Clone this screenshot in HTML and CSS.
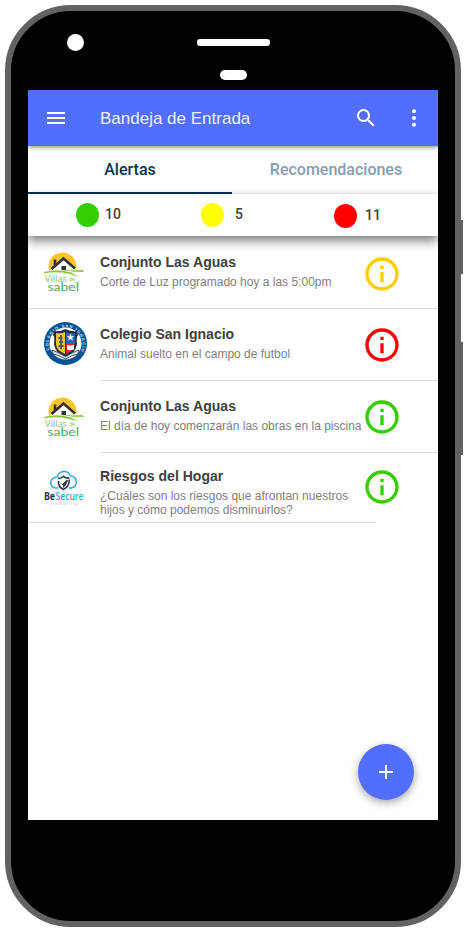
FILE: index.html
```html
<!DOCTYPE html>
<html lang="es">
<head>
<meta charset="utf-8">
<title>Bandeja de Entrada</title>
<link rel="stylesheet" href="styles.css">
</head>
<body>
<svg class="defs" width="0" height="0" aria-hidden="true">
  <defs>
    <symbol id="info" viewBox="0 0 24 24"><path d="M11 17h2v-6h-2v6zm1-15C6.480 2 2 6.480 2 12s4.480 10 10 10 10-4.480 10-10S17.520 2 12 2zm0 18c-4.410 0-8-3.590-8-8s3.590-8 8-8 8 3.590 8 8-3.590 8-8 8zM11 9h2V7h-2v2z"/></symbol>
    <clipPath id="round"><circle cx="20" cy="20" r="20"/></clipPath>
    <symbol id="villas" viewBox="0 0 40 40">
      <g clip-path="url(#round)">
        <circle cx="18.500" cy="14.500" r="14" fill="#fdc52c"/>
        <path d="M10.500 16L20.500 7.500L31 17L40 20V40H0V20L10 17z" fill="#fff"/>
        <path d="M0 20H40V40H0z" fill="#fff"/>
        <path d="M7.500 17L19.500 6.500L31 16.500M11 13V7.500" fill="none" stroke="#333138" stroke-width="2.600"/>
        <path d="M17.500 14h4.500v4h-4.500z" fill="#333138"/>
        <path d="M0 20Q20 15 35 25Q18 18 0 21.500z" fill="#8cc63f"/>
        <path d="M14 20Q26 17 39 18.500M20 21Q30 19 40 19.500" fill="none" stroke="#8cc63f" stroke-width=".9"/>
      </g>
      <text x="1" y="30" class="villas-top" textLength="22" lengthAdjust="spacingAndGlyphs">Villas</text>
      <text x="25" y="29" class="villas-de">de</text>
      <text x="3.500" y="39" class="villas-bottom" textLength="31.500" lengthAdjust="spacingAndGlyphs">sabel</text>
    </symbol>
  </defs>
</svg>
<div class="phone">
  <i class="side-key key-short"></i>
  <i class="side-key key-long"></i>
  <div class="bezel">
    <i class="camera"></i>
    <div class="sensors"><i class="speaker"></i><i class="sensor"></i></div>
  </div>
  <main class="screen">
    <header class="appbar">
      <svg class="icon menu" viewBox="0 0 24 24"><path d="M3 18h18v-2H3v2zm0-5h18v-2H3v2zm0-7v2h18V6H3z"/></svg>
      <h1>Bandeja de Entrada</h1>
      <svg class="icon search" viewBox="0 0 24 24"><path d="M15.500 14h-.79l-.28-.27A6.471 6.471 0 0 0 16 9.500 6.500 6.500 0 1 0 9.500 16c1.610 0 3.090-.59 4.230-1.570l.27.28v.79l5 4.990L20.490 19l-4.990-5zm-6 0C7.010 14 5 11.990 5 9.500S7.010 5 9.500 5 14 7.010 14 9.500 11.990 14 9.500 14z"/></svg>
      <svg class="icon" viewBox="0 0 24 24"><circle cx="12" cy="5.300" r="2"/><circle cx="12" cy="12" r="2"/><circle cx="12" cy="18.700" r="2"/></svg>
    </header>
    <nav class="tabs">
      <span class="tab active">Alertas</span>
      <span class="tab other">Recomendaciones</span>
    </nav>
    <section class="summary">
      <span class="count green"><i class="dot"></i>10</span>
      <span class="count yellow"><i class="dot"></i>5</span>
      <span class="count red"><i class="dot"></i>11</span>
    </section>
    <section class="list">
      <article class="row first">
        <div class="avatar"><svg width="40" height="40"><use href="#villas"/></svg></div>
        <div class="text"><h2>Conjunto Las Aguas</h2><p>Corte de Luz programado hoy a las 5:00pm</p></div>
        <svg class="status amber"><use href="#info"/></svg>
      </article>
      <article class="row">
        <div class="avatar"><svg width="44" height="44" viewBox="0 0 44 44">
          <defs><path id="ring" d="M5.500 28A17 17 0 1 1 37.500 28"/></defs>
          <circle cx="21.500" cy="21.500" r="21.500" fill="#075392"/>
          <circle cx="21.500" cy="21.500" r="16" fill="#fff"/>
          <text class="ring-text"><textPath href="#ring" textLength="66">COLEGIO SAN IGNACIO</textPath></text>
          <path d="M10 9Q16 10 21.500 7Q27 10 33 9L34 13Q32 15 33 22Q32 31 21.500 35Q11 31 10 22Q11 15 9 13z" fill="#222b42"/>
          <path d="M12 11Q17 12 21 10V32Q12 28 12 22z" fill="#f5c331"/>
          <path d="M22 10Q26 12 31 11V21H22z" fill="#2368b5"/>
          <path d="M22 21h9Q31 29 22 32z" fill="#d92635"/>
          <path d="M26.500 11.500l1 2.700h2.700l-2.100 1.700.8 2.600-2.400-1.500-2.400 1.500.8-2.600-2.100-1.700h2.700z" fill="#fff"/>
          <path d="M23 23l3.500.6 3.500-.6v4.500l-3.500.7-3.500-.7z" fill="#fff"/>
          <path d="M17 13v14M14.500 16h4M15 20h4M14.500 24h5" stroke="#4b5668" stroke-width="1.800"/>
          <path d="M8 28Q14 30 21.500 34.500Q29 30 35 28L34 32Q28 33 21.500 37Q15 33 9 32z" fill="#d9dde1" stroke="#222b42" stroke-width=".8"/>
        </svg></div>
        <div class="text"><h2>Colegio San Ignacio</h2><p>Animal suelto en el campo de futbol</p></div>
        <svg class="status danger"><use href="#info"/></svg>
      </article>
      <article class="row">
        <div class="avatar"><svg width="40" height="40"><use href="#villas"/></svg></div>
        <div class="text"><h2>Conjunto Las Aguas</h2><p>El día de hoy comenzarán las obras en la piscina</p></div>
        <svg class="status ok"><use href="#info"/></svg>
      </article>
      <article class="row last">
        <div class="avatar"><svg width="40" height="40" viewBox="0 0 40 40">
          <path d="M14.500 21H11.500A5.200 5.200 0 0 1 11 10.700Q12 9.500 13.300 9.700A7 7 0 0 1 26.500 8.700Q32.300 9.500 32.300 15Q32 20.500 27 21H25" fill="none" stroke="#2fa9df" stroke-width="1.500"/>
          <path d="M14 11.500Q17.500 11.500 19.500 9.300Q22 11.500 25.500 11M14.500 14Q14 20 19.500 22.500Q25 20 25.500 12.500" fill="none" stroke="#263348" stroke-width="1.600"/>
          <path d="M15.500 16l3 1 4.500-4.500 1 1-2 4.500-3 3v-3z" fill="#263348"/>
          <text x="0" y="33" class="secure-be" textLength="11" lengthAdjust="spacingAndGlyphs">Be</text>
          <text x="11.500" y="33" class="secure" textLength="28" lengthAdjust="spacingAndGlyphs">Secure</text>
          <text x="7" y="37.500" class="secure-tag" textLength="27">SEGURIDAD TOTAL</text>
        </svg></div>
        <div class="text"><h2>Riesgos del Hogar</h2><p>¿Cuáles son los riesgos que afrontan nuestros<br>hijos y cómo podemos disminuirlos?</p></div>
        <svg class="status ok"><use href="#info"/></svg>
      </article>
    </section>
    <div class="fab"><svg class="icon" viewBox="0 0 24 24"><path d="M19 13h-6v6h-2v-6H5v-2h6V5h2v6h6v2z"/></svg></div>
  </main>
</div>
</body>
</html>
```

FILE: styles.css
```css
* { box-sizing: border-box; }
body { margin: 0; padding: 5px; background: #fff; font-family: "Liberation Sans", Arial, sans-serif; }
h1, h2, p { margin: 0; }
.defs { position: absolute; }
.phone { position: relative; width: 456px; height: 922px; border: 6px solid #626262; border-radius: 66px; background: #000; padding: 0 17px; }
.side-key { position: absolute; right: -8px; width: 8px; background: #626262; }
.key-short { top: 209px; height: 54px; }
.key-long { top: 331px; height: 113px; }
.bezel { height: 79px; display: flex; padding-left: 39px; }
.camera { width: 17px; height: 17px; margin-top: 23px; border-radius: 50%; background: #fff; }
.sensors { display: flex; flex-direction: column; align-items: center; margin-left: 113px; padding-top: 28px; gap: 24px; }
.speaker { width: 73px; height: 7px; border-radius: 3px; background: #fff; }
.sensor { width: 27px; height: 10px; border-radius: 5px; background: #fff; }
.screen { position: relative; width: 410px; height: 730px; background: #fff; overflow: hidden; }
.appbar { position: relative; z-index: 3; height: 56px; padding: 0 12px 0 16px; display: flex; align-items: center; background: #526eff; box-shadow: 0 1px 5px rgba(0,0,0,.5); }
.icon { width: 24px; height: 24px; fill: #fff; flex: none; }
.appbar h1 { margin-left: 32px; padding-top: 2px; flex: 1; font-size: 17px; font-weight: 400; color: #eef0ff; }
.search { margin-right: 24px; }
.tabs { height: 48px; display: flex; font: 500 16px Roboto, sans-serif; color: #869db2; }
.tab { flex: 1; display: flex; align-items: center; justify-content: center; padding-top: 1px; border-bottom: 2px solid transparent; }
.tab.active { flex: 0 0 204px; color: #003358; border-color: #003358; }
.other { padding-left: 2px; }
.summary { position: relative; z-index: 2; height: 42px; display: grid; grid-template-columns: 125px 133px 1fr; padding-left: 48px; background: #fff; box-shadow: 0 5px 10px rgba(0,0,0,.5), 0 0 2px rgba(0,0,0,.1); font: 500 14px Roboto, sans-serif; color: #404040; }
.count { display: flex; align-items: center; gap: 6px; padding-bottom: 2px; }
.dot { width: 23px; height: 24px; border-radius: 50%; position: relative; top: 1px; }
.green .dot { background: #33cd00; }
.yellow .dot { background: #ff0; }
.yellow { gap: 11px; }
.red .dot { background: red; }
.red { gap: 8px; padding-bottom: 0; }
.row { height: 72px; display: flex; padding-left: 16px; }
.row.first { height: 73px; border-bottom: 1px solid #ddd; }
.avatar { width: 56px; padding-top: 16px; flex: none; }
.row:nth-child(2) .avatar { padding-top: 13px; }
.avatar svg { display: block; }
.text { flex: 1; padding-top: 18px; border-bottom: 1px solid #ddd; }
.first .text { border: 0; }
.row:nth-child(2) .text, .row:nth-child(3) .text { padding-top: 17px; }
.text h2 { font-size: 14px; line-height: 16px; color: #404040; letter-spacing: .02px; }
.text p { margin-top: 5px; font-size: 12px; line-height: 14px; color: #808080; white-space: nowrap; }
.status { position: absolute; width: 40px; height: 40px; left: 334px; top: 164px; }
.row:nth-child(2) .status { top: 235px; }
.row:nth-child(3) .status { top: 307px; }
.row:nth-child(4) .status { top: 377px; }
.amber { fill: #fc0; }
.danger { fill: #f00; }
.ok { fill: #33cd00; }
.last { width: 348px; height: 70px; border-bottom: 1px solid #ddd; }
.last .avatar { padding-top: 14px; }
.last .text { padding-top: 15px; border: 0; }
.fab { position: absolute; right: 24px; bottom: 20px; width: 56px; height: 56px; display: flex; align-items: center; justify-content: center; border-radius: 50%; background: #526eff; box-shadow: 0 3px 8px rgba(0,0,0,.35); }
.villas-top { font: 9.5px "Open Sans", sans-serif; fill: #8fbc6a; }
.villas-de { font: 5px "Open Sans", sans-serif; fill: #7ab648; }
.villas-bottom { font: 12px Lato, sans-serif; fill: #4ea957; }
.ring-text { font: bold 4px "Liberation Sans", sans-serif; fill: #d7e8f4; }
.secure-be { font: bold 10px "Open Sans", sans-serif; fill: #263348; }
.secure { font: 600 10px "Open Sans", sans-serif; fill: #2fa9df; }
.secure-tag { font: 3px "Open Sans", sans-serif; fill: #ccc; }
```
